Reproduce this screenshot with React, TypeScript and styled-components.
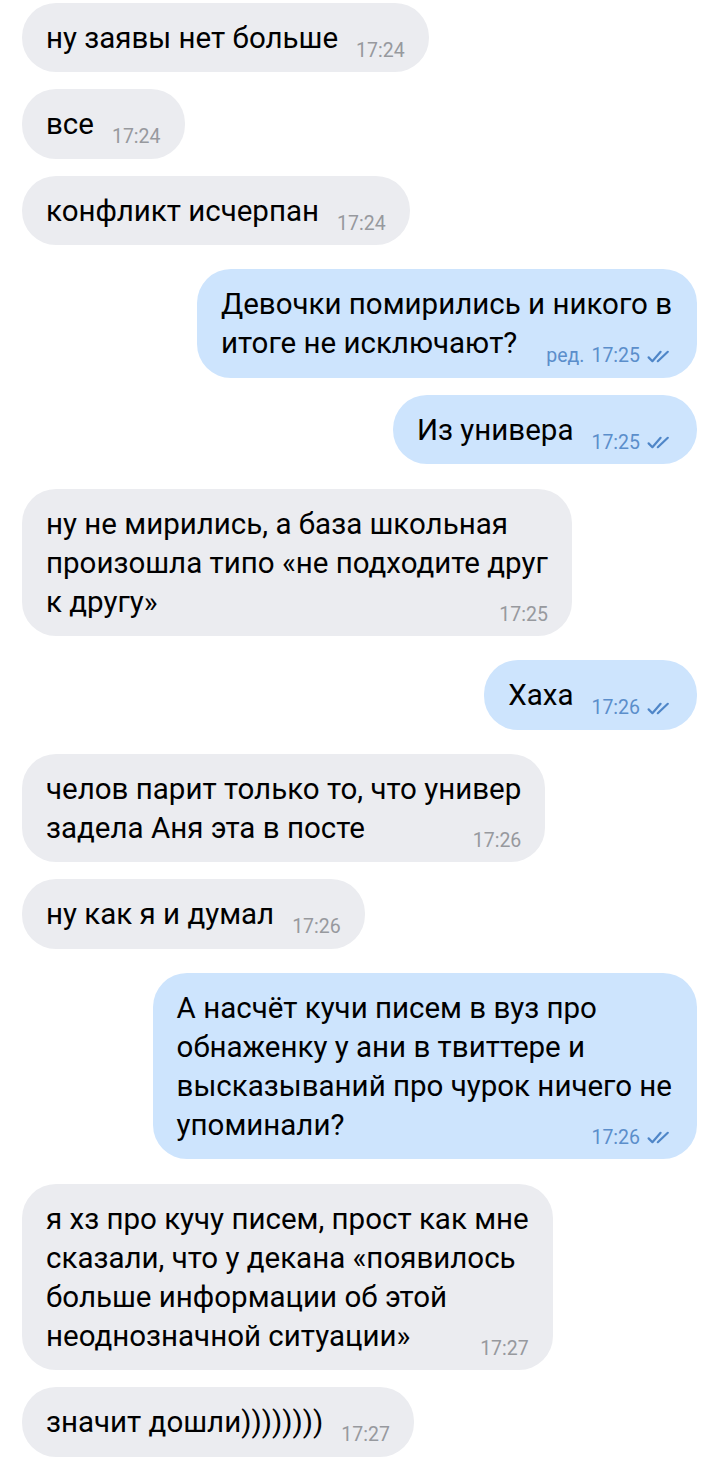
import React from "react"
import styled, { createGlobalStyle } from "styled-components"

const GlobalStyle = createGlobalStyle`
  html, body {
    margin: 0;
    padding: 0;
    background: #ffffff;
  }
  body {
    font-family: Roboto, "Noto Sans", "Liberation Sans", sans-serif;
    -webkit-font-smoothing: antialiased;
  }
`

type Message = {
  out?: boolean
  lines: string[]
  time: string
  edited?: boolean
  gap: number
}

const messages: Message[] = [
  { lines: ["ну заявы нет больше"], time: "17:24", gap: 3 },
  { lines: ["все"], time: "17:24", gap: 17 },
  { lines: ["конфликт исчерпан"], time: "17:24", gap: 17 },
  {
    out: true,
    lines: ["Девочки помирились и никого в", "итоге не исключают?"],
    time: "17:25",
    edited: true,
    gap: 24,
  },
  { out: true, lines: ["Из универа"], time: "17:25", gap: 17 },
  {
    lines: [
      "ну не мирились, а база школьная",
      "произошла типо «не подходите друг",
      "к другу»",
    ],
    time: "17:25",
    gap: 25,
  },
  { out: true, lines: ["Хаха"], time: "17:26", gap: 24 },
  {
    lines: ["челов парит только то, что универ", "задела Аня эта в посте"],
    time: "17:26",
    gap: 24,
  },
  { lines: ["ну как я и думал"], time: "17:26", gap: 17 },
  {
    out: true,
    lines: [
      "А насчёт кучи писем в вуз про",
      "обнаженку у ани в твиттере и",
      "высказываний про чурок ничего не",
      "упоминали?",
    ],
    time: "17:26",
    gap: 24,
  },
  {
    lines: [
      "я хз про кучу писем, прост как мне",
      "сказали, что у декана «появилось",
      "больше информации об этой",
      "неоднозначной ситуации»",
    ],
    time: "17:27",
    gap: 25,
  },
  { lines: ["значит дошли))))))))"], time: "17:27", gap: 17 },
]

function DoubleCheck() {
  return (
    <svg width="25" height="13" viewBox="0 0 25 13" fill="none">
      <path
        d="M1.6 7.4 L5.4 11.2 L13.6 1.8"
        stroke="currentColor"
        strokeWidth="2.2"
        strokeLinecap="round"
        strokeLinejoin="round"
      />
      <path
        d="M10.8 11.2 L20.8 1.8"
        stroke="currentColor"
        strokeWidth="2.2"
        strokeLinecap="round"
      />
    </svg>
  )
}

export default function App() {
  return (
    <>
      <GlobalStyle />
      <Chat>
        {messages.map((m, i) => {
          const last = m.lines[m.lines.length - 1]
          const rest = m.lines.slice(0, -1)
          return (
            <Row key={i} $out={!!m.out} $gap={m.gap}>
              <Bubble $out={!!m.out}>
                {rest.map((l, j) => (
                  <Line key={j}>{l}</Line>
                ))}
                <LastLine>
                  <Line>{last}</Line>
                  <Meta $out={!!m.out}>
                    {m.edited && <span>ред.</span>}
                    <span>{m.time}</span>
                    {m.out && <DoubleCheck />}
                  </Meta>
                </LastLine>
              </Bubble>
            </Row>
          )
        })}
      </Chat>
    </>
  )
}

const Chat = styled.div`
  display: flex;
  flex-direction: column;
  padding: 0 23px 8px 22px;
  min-height: 1465px;
  box-sizing: border-box;
`

const Row = styled.div<{ $out: boolean; $gap: number }>`
  display: flex;
  justify-content: ${(p) => (p.$out ? "flex-end" : "flex-start")};
  margin-top: ${(p) => p.$gap}px;
`

const Bubble = styled.div<{ $out: boolean }>`
  display: flex;
  flex-direction: column;
  padding: 16px ${(p) => (p.$out ? 25 : 24)}px 14.4px 24px;
  border-radius: 34px;
  background: ${(p) => (p.$out ? "#cde4fd" : "#ebecf0")};
  color: #000000;
  font-size: 29.5px;
  line-height: 39px;
  white-space: nowrap;
`

const Line = styled.div``

const LastLine = styled.div`
  display: flex;
  align-items: baseline;
  gap: 18px;
`

const Meta = styled.div<{ $out: boolean }>`
  margin-left: auto;
  display: flex;
  align-items: baseline;
  gap: 7px;
  font-size: 19.5px;
  line-height: 20px;
  color: ${(p) => (p.$out ? "#5b8ecb" : "#97999e")};
  position: relative;
  top: 9px;

  svg {
    align-self: center;
    color: #4f86c8;
  }
`
